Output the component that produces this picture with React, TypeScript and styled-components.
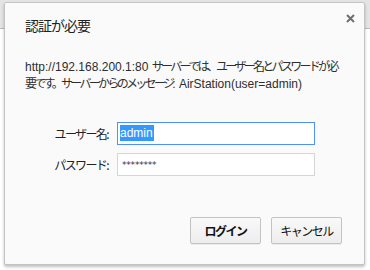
import React from "react";
import styled, { createGlobalStyle } from "styled-components";

const GlobalStyle = createGlobalStyle`
  html, body {
    margin: 0;
    padding: 0;
    background: #ffffff;
  }
  body {
    width: 370px;
    height: 270px;
    overflow: hidden;
    font-family: "Liberation Sans", "Noto Sans CJK JP", sans-serif;
  }
`;

const Page = styled.div`
  position: relative;
  width: 370px;
  height: 270px;
`;

const TabStrip = styled.div`
  height: 28px;
  background: #e4e4e4;
  border-bottom: 1px solid #b9b9b9;
`;

const Dialog = styled.div`
  position: absolute;
  left: 4px;
  top: 2px;
  width: 359px;
  height: 261px;
  background: #fafafa;
  border: 1px solid #c4c4c4;
  border-radius: 2px;
  box-shadow: 0 2px 3px rgba(0, 0, 0, 0.25);
  display: flex;
  flex-direction: column;
`;

const Header = styled.div`
  display: flex;
  justify-content: space-between;
  align-items: flex-start;
  padding: 12px 9px 0 20px;
`;

const Title = styled.h1`
  margin: 0;
  font-family: "Noto Sans CJK JP", sans-serif;
  font-size: 14px;
  font-weight: 400;
  line-height: 20px;
  color: #222;
  letter-spacing: -1px;
`;

const Close = styled.div`
  width: 10px;
  height: 10px;
  margin-top: -2px;
  display: flex;
  align-items: center;
  justify-content: center;
  svg {
    display: block;
  }
`;

const Message = styled.p`
  margin: 23px 0 0 20px;
  font-size: 12px;
  line-height: 16px;
  color: #2e2e2e;
  white-space: nowrap;
`;

const Jp = styled.span<{ $tight?: number }>`
  font-family: "Noto Sans CJK JP", sans-serif;
  letter-spacing: ${(p) => p.$tight ?? -2.7}px;
`;

const Form = styled.div`
  display: grid;
  grid-template-columns: 92px 198px;
  column-gap: 9px;
  row-gap: 8px;
  margin: 30px 0 0 11px;
  align-items: center;
`;

const Label = styled.label`
  text-align: right;
  font-family: "Noto Sans CJK JP", sans-serif;
  font-size: 12px;
  letter-spacing: -1.6px;
  color: #222;
`;

const Field = styled.div<{ $focused?: boolean }>`
  box-sizing: border-box;
  height: 23px;
  background: #fff;
  border: 1px solid ${(p) => (p.$focused ? "#4d90fe" : "#d5d5d5")};
  padding: 2px 3px 0 2px;
  font-size: 12px;
  line-height: 16px;
  color: #000;
`;

const Selected = styled.span`
  display: inline-block;
  background: #3399ff;
  color: #fff;
  line-height: 16px;
  padding-right: 1px;
`;

const Masked = styled.span`
  display: inline-block;
  font-family: "DejaVu Sans", sans-serif;
  font-size: 9px;
  line-height: 10px;
  color: #3b2a4d;
  letter-spacing: -0.2px;
  padding-left: 2px;
`;

const Actions = styled.div`
  margin-top: auto;
  display: flex;
  justify-content: flex-end;
  gap: 10px;
  padding: 0 22px 20px 0;
`;

const Button = styled.button<{ $primary?: boolean }>`
  width: 71px;
  height: 27px;
  box-sizing: border-box;
  border: 1px solid #c3c3c3;
  border-radius: 2px;
  background: linear-gradient(#f9f9f9, #ededed);
  box-shadow: 0 1px 0 rgba(0, 0, 0, 0.06);
  font-family: "Noto Sans CJK JP", sans-serif;
  font-size: 12px;
  font-weight: ${(p) => (p.$primary ? 700 : 400)};
  letter-spacing: -1.5px;
  color: #111;
  padding: 0;
`;

export default function App() {
  return (
    <Page>
      <GlobalStyle />
      <TabStrip />
      <Dialog>
        <Header>
          <Title>認証が必要</Title>
          <Close>
            <svg width="9" height="9" viewBox="0 0 9 9">
              <path d="M1 1 L8 8 M8 1 L1 8" stroke="#6f6f6f" strokeWidth="2" />
            </svg>
          </Close>
        </Header>
        <Message>
          http://192.168.200.1:80 <Jp>サーバーでは、ユーザー名とパスワードが必</Jp>
          <br />
          <Jp>要です。サーバーからのメッセージ</Jp>: AirStation(user=admin)
        </Message>
        <Form>
          <Label>ユーザー名:</Label>
          <Field $focused>
            <Selected>admin</Selected>
          </Field>
          <Label>パスワード:</Label>
          <Field>
            <Masked>********</Masked>
          </Field>
        </Form>
        <Actions>
          <Button $primary>ログイン</Button>
          <Button>キャンセル</Button>
        </Actions>
      </Dialog>
    </Page>
  );
}
